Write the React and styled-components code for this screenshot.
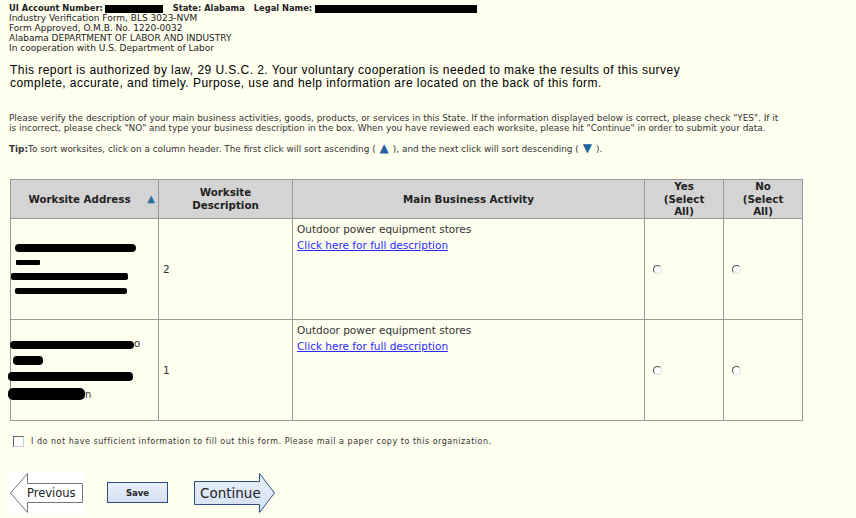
import React from 'react';
import styled, { createGlobalStyle } from 'styled-components';

const GlobalStyle = createGlobalStyle`
  body {
    margin: 0;
    background: #fffff0;
  }
`;

const Page = styled.div`
  width: 856px;
  height: 518px;
  overflow: hidden;
  box-sizing: border-box;
  padding: 3px 0 0 9px;
  font-family: "DejaVu Sans", Verdana, sans-serif;
  color: #222;
  background: #fffff0;
`;

const Header = styled.div`
  font-size: 9px;
  line-height: 10px;
  white-space: nowrap;
`;

const Label = styled.b`
  font-size: 8.3px;
  margin-left: ${(p) => p.gap || 0}px;
`;

const Redact = styled.span`
  display: inline-block;
  vertical-align: middle;
  width: ${(p) => p.w}px;
  height: ${(p) => p.h || 8}px;
  margin-left: ${(p) => p.ml || 0}px;
  background: #000;
  border-radius: ${(p) => p.r || 0}px;
`;

const Notice = styled.p`
  margin: 11px 0 0 1px;
  font-family: "Liberation Sans", Arial, sans-serif;
  font-size: 12px;
  letter-spacing: 0.45px;
  line-height: 13px;
  color: #000;
  white-space: nowrap;
`;

const Instructions = styled.p`
  margin: 23px 0 0;
  font-size: 8.9px;
  line-height: 10px;
  color: #333;
  white-space: nowrap;
`;

const Tip = styled.p`
  margin: 10px 0 0;
  font-size: 8.9px;
  line-height: 10px;
  color: #333;
`;

const Arrow = styled.span`
  color: #1d64a0;
  font-size: 12px;
  margin: 0 4px;
`;

const Table = styled.table`
  margin: 25px 0 0 1px;
  border-collapse: collapse;
  table-layout: fixed;
  width: 793px;
`;

const Th = styled.th`
  box-sizing: border-box;
  width: ${(p) => p.w}px;
  height: 36px;
  padding: ${(p) => (p.sortable ? '0 14px 0 4px' : '0 4px')};
  background: #d4d4d4;
  border: 1px solid #999;
  font-size: 10.3px;
  line-height: 12.6px;
  font-weight: bold;
  color: #222;
  text-align: center;
  position: relative;
`;

const SortMark = styled.span`
  position: absolute;
  right: 3px;
  top: 13px;
  color: #24709f;
  font-size: 10px;
`;

const Td = styled.td`
  height: 96px;
  border: 1px solid #999;
  padding: ${(p) => p.pad || '0 4px'};
  vertical-align: ${(p) => p.va || 'middle'};
  font-size: 10.5px;
  line-height: 16px;
  color: #333;
`;

const AddressLines = styled.div`
  display: flex;
  flex-direction: column;
  align-items: flex-start;
  gap: ${(p) => p.gap || 8}px;
  margin-left: -4px;
`;

const Tail = styled.span`
  display: inline-flex;
  align-items: flex-end;
  font-size: 10px;
  line-height: 10px;
  color: #333;
`;

const Link = styled.a`
  color: #2a2aff;
  text-decoration: underline;
  cursor: pointer;
`;

const Radio = styled.input.attrs({ type: 'radio' })`
  appearance: none;
  width: 9px;
  height: 9px;
  margin: 0 0 0 4px;
  border-radius: 50%;
  border: 1px solid;
  border-color: #555 #ddd #ddd #555;
  background: #fff;
  vertical-align: middle;
`;

const OptOut = styled.label`
  display: flex;
  align-items: center;
  margin: 15px 0 0 4px;
  font-size: 8px;
  letter-spacing: 0.52px;
  color: #333;
`;

const Box = styled.input.attrs({ type: 'checkbox' })`
  appearance: none;
  width: 11px;
  height: 11px;
  margin: 0 7px 0 0;
  border: 1px solid;
  border-color: #666 #ccc #ccc #666;
  background: #fff;
`;

const Buttons = styled.div`
  display: flex;
  align-items: center;
  margin: 24px 0 0 -1px;
`;

const ShapeButton = styled.button`
  position: relative;
  width: ${(p) => p.w}px;
  height: 44px;
  margin-left: ${(p) => p.ml || 0}px;
  padding: 0 0 0 ${(p) => p.pl}px;
  border: none;
  background: ${(p) => p.bg || 'transparent'};
  font-family: Tahoma, "DejaVu Sans", sans-serif;
  font-size: ${(p) => p.fs}px;
  color: #222;
  text-align: left;
  cursor: pointer;
  svg {
    position: absolute;
    left: 0;
    top: 0;
  }
  span {
    position: relative;
  }
`;

const SaveButton = styled.button`
  width: 61px;
  height: 21px;
  margin-left: 21px;
  padding: 0;
  border: 1px solid #2b4b86;
  background: linear-gradient(#e8eff9, #d4e0f2);
  font-family: "DejaVu Sans", Verdana, sans-serif;
  font-size: 8.5px;
  font-weight: bold;
  color: #222;
  cursor: pointer;
`;

const rows = [
  {
    desc: '2',
    gap: 8,
    bars: [
      { w: 121, h: 8, ml: 4, r: 4 },
      { w: 24, h: 5, ml: 5, r: 1 },
      { w: 117, h: 7, ml: 0, r: 2 },
      { w: 112, h: 6, ml: 4, r: 2 },
    ],
  },
  {
    desc: '1',
    gap: 7,
    bars: [
      { w: 124, h: 8, ml: -1, r: 4, tail: 'o' },
      { w: 30, h: 9, ml: 2, r: 4 },
      { w: 125, h: 9, ml: -3, r: 4 },
      { w: 77, h: 12, ml: -3, r: 5, tail: 'n' },
    ],
  },
];

const App = () => (
  <Page>
    <GlobalStyle />
    <Header>
      <div>
        <Label>UI Account Number:</Label>
        <Redact w={58} ml={2} />
        <Label gap={10}>State: Alabama</Label>
        <Label gap={9}>Legal Name:</Label>
        <Redact w={162} ml={3} />
      </div>
      <div>Industry Verification Form, BLS 3023-NVM</div>
      <div>Form Approved, O.M.B. No. 1220-0032</div>
      <div>Alabama DEPARTMENT OF LABOR AND INDUSTRY</div>
      <div>In cooperation with U.S. Department of Labor</div>
    </Header>

    <Notice>
      This report is authorized by law, 29 U.S.C. 2. Your voluntary cooperation is needed to make the results of this survey
      <br />
      complete, accurate, and timely. Purpose, use and help information are located on the back of this form.
    </Notice>

    <Instructions>
      Please verify the description of your main business activities, goods, products, or services in this State. If the information displayed below is correct, please check "YES". If it
      <br />
      is incorrect, please check "NO" and type your business description in the box. When you have reviewed each worksite, please hit "Continue" in order to submit your data.
    </Instructions>

    <Tip>
      <b>Tip:</b>To sort worksites, click on a column header. The first click will sort ascending (
      <Arrow>▲</Arrow>), and the next click will sort descending (<Arrow>▼</Arrow>).
    </Tip>

    <Table>
      <thead>
        <tr>
          <Th w={148} sortable>
            Worksite Address
            <SortMark>▲</SortMark>
          </Th>
          <Th w={134}>
            Worksite
            <br />
            Description
          </Th>
          <Th w={352}>Main Business Activity</Th>
          <Th w={79}>
            Yes
            <br />
            (Select
            <br />
            All)
          </Th>
          <Th w={79}>
            No
            <br />
            (Select
            <br />
            All)
          </Th>
        </tr>
      </thead>
      <tbody>
        {rows.map((row, i) => (
          <tr key={i}>
            <Td>
              <AddressLines gap={row.gap}>
                {row.bars.map((b, j) => (
                  <Tail key={j}>
                    <Redact w={b.w} h={b.h} ml={b.ml} r={b.r} />
                    {b.tail}
                  </Tail>
                ))}
              </AddressLines>
            </Td>
            <Td>{row.desc}</Td>
            <Td va="top" pad="2px 4px">
              Outdoor power equipment stores
              <br />
              <Link>Click here for full description</Link>
            </Td>
            <Td>
              <Radio name={`row${i}`} />
            </Td>
            <Td>
              <Radio name={`row${i}`} />
            </Td>
          </tr>
        ))}
      </tbody>
    </Table>

    <OptOut>
      <Box />
      I do not have sufficient information to fill out this form. Please mail a paper copy to this organization.
    </OptOut>

    <Buttons>
      <ShapeButton w={78} pl={19} fs={11.5} bg="#fff">
        <svg width="78" height="44" viewBox="0 0 78 44">
          <path d="M2.5 22 L19.5 2.5 L19.5 12.5 L74.5 12.5 L74.5 31.5 L19.5 31.5 L19.5 41.5 Z" fill="#fff" stroke="#777" strokeWidth="1" />
        </svg>
        <span>Previous</span>
      </ShapeButton>
      <SaveButton>Save</SaveButton>
      <ShapeButton w={82} ml={26} pl={6} fs={13.5}>
        <svg width="82" height="44" viewBox="0 0 82 44">
          <defs>
            <linearGradient id="cg" x1="0" y1="0" x2="0" y2="1">
              <stop offset="0" stopColor="#e9f0fa" />
              <stop offset="1" stopColor="#d3dff2" />
            </linearGradient>
          </defs>
          <path d="M0.5 10.5 L65.5 10.5 L65.5 2.5 L80.5 22 L65.5 41.5 L65.5 33.5 L0.5 33.5 Z" fill="url(#cg)" stroke="#2d4f88" strokeWidth="1" />
        </svg>
        <span>Continue</span>
      </ShapeButton>
    </Buttons>
  </Page>
);

export default App;
